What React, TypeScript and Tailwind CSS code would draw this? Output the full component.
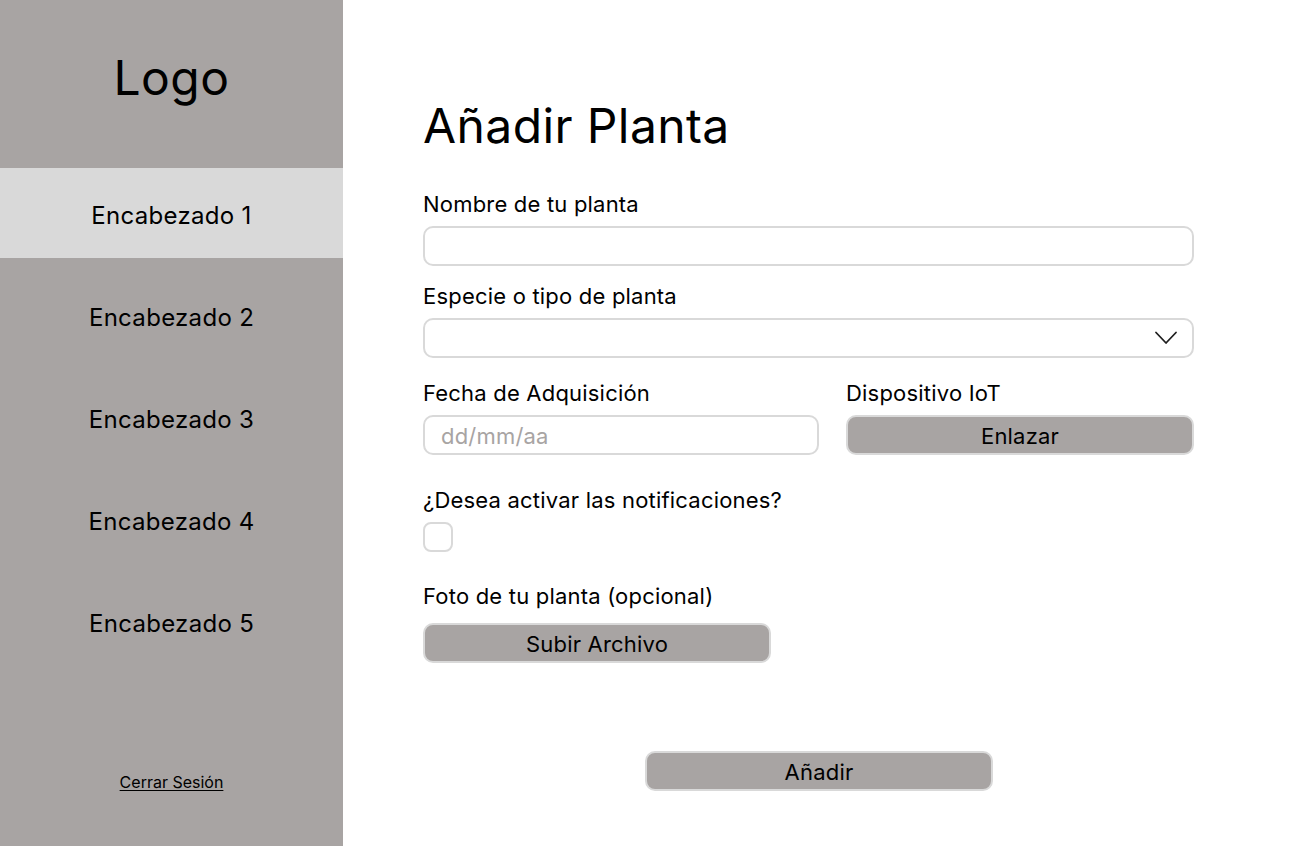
const NAV_ITEMS = [
  "Encabezado 1",
  "Encabezado 2",
  "Encabezado 3",
  "Encabezado 4",
  "Encabezado 5",
];

const FONT = { fontFamily: "Inter, 'Noto Sans', sans-serif" };

function Label({ children }: { children: React.ReactNode }) {
  return <p className="text-[22px] leading-6 tracking-[0.2px] text-black">{children}</p>;
}

function GreyButton({ children }: { children: React.ReactNode }) {
  return (
    <button
      type="button"
      className="flex h-10 w-[348px] items-center justify-center rounded-[10px] border-2 border-[#d9d9d9] bg-[#a8a4a3] pt-[2px] text-[22px] leading-6 tracking-[0.2px] text-black"
    >
      {children}
    </button>
  );
}

export default function App() {
  return (
    <div className="flex h-[846px] w-[1303px] overflow-hidden bg-white" style={FONT}>
      {/* Sidebar */}
      <aside className="flex h-full w-[343px] shrink-0 flex-col bg-[#a8a4a3]">
        <div className="flex h-[168px] justify-center pt-[54px]">
          <span className="text-[48px] leading-[48px] tracking-[0.5px] text-black">Logo</span>
        </div>
        <nav className="flex flex-col gap-3">
          {NAV_ITEMS.map((item, i) => (
            <a
              key={item}
              href="#"
              className={`flex h-[90px] items-center justify-center pt-[5px] text-[24px] leading-7 tracking-[0.3px] text-black ${
                i === 0 ? "bg-[#d9d9d9]" : ""
              }`}
            >
              {item}
            </a>
          ))}
        </nav>
        <div className="mt-auto flex justify-center pb-[52px]">
          <a href="#" className="text-[16px] leading-6 text-black underline underline-offset-2">
            Cerrar Sesión
          </a>
        </div>
      </aside>

      {/* Main */}
      <main className="flex-1 pl-[80px] pt-[102px]">
        <div className="flex w-[771px] flex-col">
          <h1 className="text-[48px] leading-[48px] tracking-[0.4px] text-black">Añadir Planta</h1>

          <div className="mt-[42px] flex flex-col gap-[10px]">
            <Label>Nombre de tu planta</Label>
            <input
              type="text"
              className="h-10 w-full rounded-[10px] border-2 border-[#d9d9d9] bg-white px-4 text-[22px] outline-none"
            />
          </div>

          <div className="mt-[18px] flex flex-col gap-[10px]">
            <Label>Especie o tipo de planta</Label>
            <div className="flex h-10 w-full items-center justify-end rounded-[10px] border-2 border-[#d9d9d9] bg-white pr-[14px]">
              <svg width="24" height="16" viewBox="0 0 24 16" fill="none">
                <path
                  d="M2 2.5L12 13L22 2.5"
                  stroke="#1e1e1e"
                  strokeWidth="1.8"
                  strokeLinecap="round"
                  strokeLinejoin="round"
                />
              </svg>
            </div>
          </div>

          <div className="mt-[23px] flex gap-[27px]">
            <div className="flex w-[396px] flex-col gap-[10px]">
              <Label>Fecha de Adquisición</Label>
              <input
                type="text"
                placeholder="dd/mm/aa"
                className="h-10 w-full rounded-[10px] border-2 border-[#d9d9d9] bg-white px-4 pt-[2px] text-[22px] tracking-[0.2px] text-black outline-none placeholder:text-[#a8a4a3]"
              />
            </div>
            <div className="flex w-[348px] flex-col gap-[10px]">
              <Label>Dispositivo IoT</Label>
              <GreyButton>Enlazar</GreyButton>
            </div>
          </div>

          <div className="mt-[33px] flex flex-col gap-[10px]">
            <Label>¿Desea activar las notificaciones?</Label>
            <button
              type="button"
              aria-label="Activar notificaciones"
              className="size-[30px] rounded-[8px] border-2 border-[#d9d9d9] bg-white"
            />
          </div>

          <div className="mt-[32px] flex flex-col gap-[15px]">
            <Label>Foto de tu planta (opcional)</Label>
            <GreyButton>Subir Archivo</GreyButton>
          </div>

          <div className="mt-[88px] pl-[222px]">
            <GreyButton>Añadir</GreyButton>
          </div>
        </div>
      </main>
    </div>
  );
}
